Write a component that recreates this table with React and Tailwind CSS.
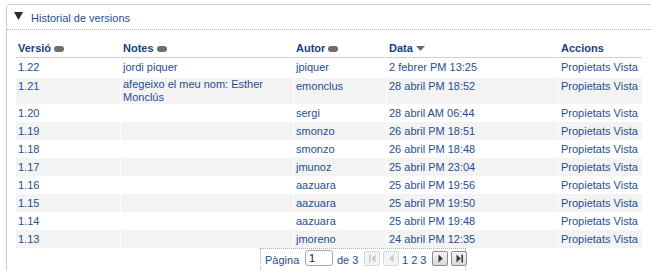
import React from "react";

const rows = [
  { v: "1.22", n: "jordi piquer", a: "jpiquer", d: "2 febrer PM 13:25", h: "h-[20px]" },
  { v: "1.21", n: "afegeixo el meu nom: Esther Monclús", a: "emonclus", d: "28 abril PM 18:52", h: "h-[26px]", two: true },
  { v: "1.20", n: "", a: "sergi", d: "28 abril AM 06:44", h: "h-[18px]" },
  { v: "1.19", n: "", a: "smonzo", d: "26 abril PM 18:51", h: "h-[18px]" },
  { v: "1.18", n: "", a: "smonzo", d: "26 abril PM 18:48", h: "h-[18px]" },
  { v: "1.17", n: "", a: "jmunoz", d: "25 abril PM 23:04", h: "h-[18px]" },
  { v: "1.16", n: "", a: "aazuara", d: "25 abril PM 19:56", h: "h-[18px]" },
  { v: "1.15", n: "", a: "aazuara", d: "25 abril PM 19:50", h: "h-[18px]" },
  { v: "1.14", n: "", a: "aazuara", d: "25 abril PM 19:48", h: "h-[18px]" },
  { v: "1.13", n: "", a: "jmoreno", d: "24 abril PM 12:35", h: "h-[18px]" },
];

const Pill = () => (
  <span className="inline-block ml-[3px] w-[10px] h-[6px] rounded-full bg-[#6e6e6e] align-middle mb-[1px]" />
);

function PagerBtn({ disabled, kind }) {
  const c = disabled ? "#c5c9cd" : "#3a3a3a";
  return (
    <span
      className={
        "shrink-0 inline-flex items-center justify-center w-[16px] h-[15px] rounded-[2px] border " +
        (disabled
          ? "border-[#d6d8da] bg-[#f3f4f5]"
          : "border-[#8c8c8c] bg-gradient-to-b from-[#f6f6f6] to-[#d9d9d9]")
      }
    >
      <svg width="11" height="11" viewBox="0 0 11 11">
        {kind === "first" && (
          <>
            <rect x="2" y="1.5" width="1.6" height="8" fill={c} />
            <polygon points="8.5,1.5 8.5,9.5 4.2,5.5" fill={c} />
          </>
        )}
        {kind === "prev" && <polygon points="7.5,1.5 7.5,9.5 3.2,5.5" fill={c} />}
        {kind === "next" && <polygon points="3.5,1.5 3.5,9.5 7.8,5.5" fill={c} />}
        {kind === "last" && (
          <>
            <polygon points="2.5,1.5 2.5,9.5 6.8,5.5" fill={c} />
            <rect x="7.4" y="1.5" width="1.6" height="8" fill={c} />
          </>
        )}
      </svg>
    </span>
  );
}

export default function App() {
  const font = { fontFamily: '"Liberation Sans", Arial, sans-serif' };
  const cols = ["w-[104px]", "w-[172px]", "w-[92px]", "w-[171px]", "w-[83px]"];
  return (
    <div className="w-[651px] h-[271px] overflow-hidden bg-white text-[11px] text-[#1f4f8e]" style={font}>
      <div className="ml-[6px] mt-[4px] border-t border-l border-[#c9cdd1] rounded-tl-[5px] h-[300px]">
        <div className="h-[25px] flex items-center border-b border-dotted border-[#b5b5b5] pl-[7px]">
          <svg width="9" height="8" viewBox="0 0 9 8" className="mr-[8px] mt-[-3px]">
            <polygon points="0,0 9,0 4.5,8" fill="#2b2b2b" />
          </svg>
          <span className="leading-[14px] mt-[2px]">Historial de versions</span>
        </div>
        <div className="pl-[9px] pt-[8px]">
          <div className="flex gap-[1px] h-[20px]">
            {[
              <>Versió<Pill /></>,
              <>Notes<Pill /></>,
              <>Autor<Pill /></>,
              <>
                Data
                <svg width="9" height="5" viewBox="0 0 9 5" className="inline-block ml-[3px] align-middle mb-[1px]">
                  <polygon points="0,0 9,0 4.5,5" fill="#6a6a6a" />
                </svg>
              </>,
              <>Accions</>,
            ].map((c, i) => (
              <div
                key={i}
                className={cols[i] + " flex items-end pb-[2px] pl-[2px] border-b border-[#cfd2d5] font-bold text-[#15427f] leading-[14px]"}
              >
                <span>{c}</span>
              </div>
            ))}
          </div>
          {rows.map((r, idx) => {
            const bg = idx % 2 === 1 ? "bg-[#f3f3f3]" : "bg-white";
            const cells = [r.v, r.n, r.a, r.d, "Propietats Vista"];
            return (
              <div key={r.v} className={"flex gap-[1px] " + r.h}>
                {cells.map((c, i) => (
                  <div
                    key={i}
                    className={
                      cols[i] +
                      " " +
                      bg +
                      " pl-[2px] " +
                      (r.two && i === 1 ? "leading-[13px] pt-[0px] pr-[6px]" : r.two ? "leading-[14px] pt-[1px]" : "leading-[14px] pt-[2px]")
                    }
                  >
                    {c}
                  </div>
                ))}
              </div>
            );
          })}
          <div className="ml-[244px] w-[206px] h-[30px] border-t border-l border-r border-dotted border-[#b0b0b0] flex items-start pt-[1px] pl-[4px] whitespace-nowrap">
            <span className="shrink-0 w-[36px] leading-[14px] mt-[3px]">Pàgina</span>
            <span className="shrink-0 ml-[4px] w-[28px] h-[16px] border border-[#a8a8a8] rounded-[3px] text-[#1a1a1a] pl-[3px] leading-[14px] bg-white">
              1
            </span>
            <span className="shrink-0 ml-[4px] w-[22px] leading-[14px] mt-[3px]">de 3</span>
            <span className="shrink-0 ml-[5px] flex items-center gap-[3px] mt-[1px]">
              <PagerBtn disabled kind="first" />
              <PagerBtn disabled kind="prev" />
            </span>
            <span className="shrink-0 ml-[3px] leading-[14px] mt-[3px] text-[#154a90]">1 2 3</span>
            <span className="shrink-0 ml-[6px] flex items-center gap-[3px] mt-[1px]">
              <PagerBtn kind="next" />
              <PagerBtn kind="last" />
            </span>
          </div>
        </div>
      </div>
    </div>
  );
}
